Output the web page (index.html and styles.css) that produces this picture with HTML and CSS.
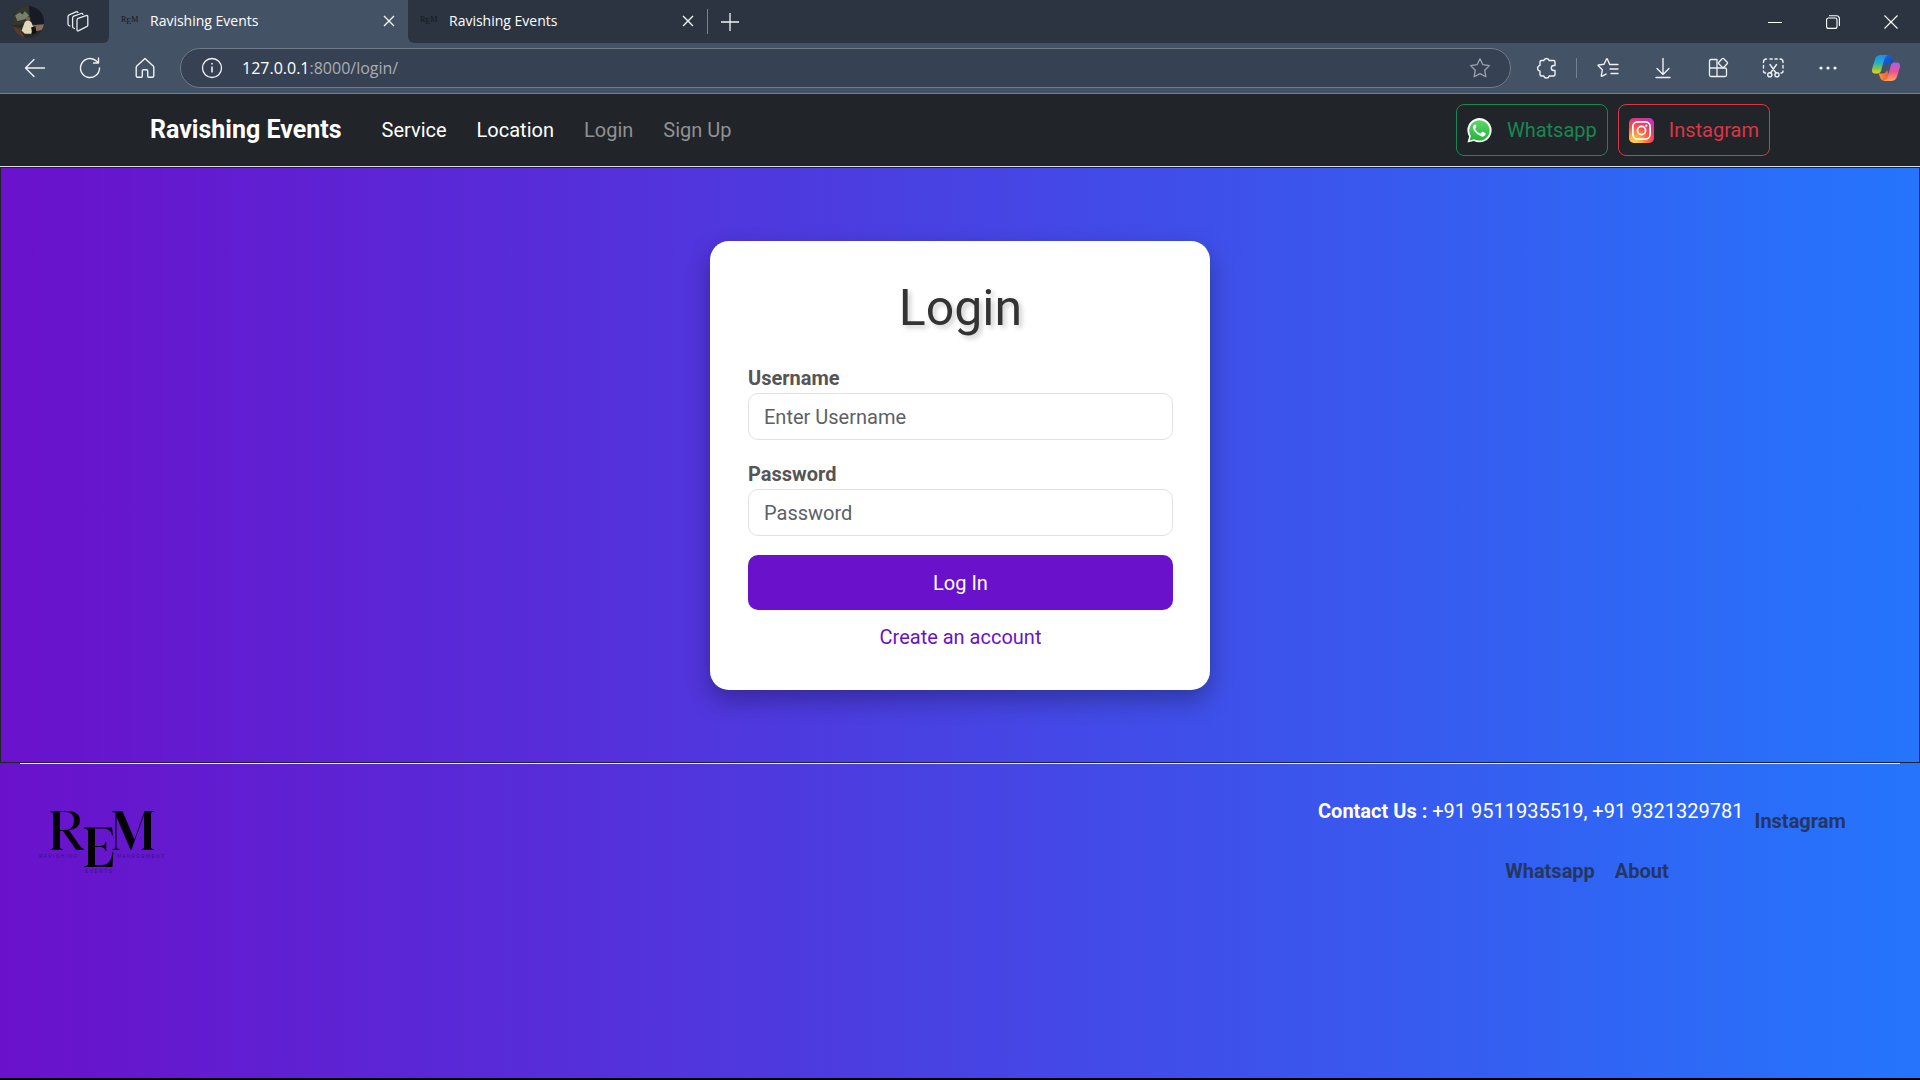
FILE: index.html
```html
<!DOCTYPE html>
<html lang="en">
<head>
<meta charset="utf-8">
<title>Ravishing Events</title>
<link rel="stylesheet" href="styles.css">
</head>
<body>
<header class="browser">
  <div class="tabstrip">
    <div class="tabstrip-start">
      <svg class="avatar" viewBox="0 0 30 30" aria-hidden="true">
        <defs><clipPath id="avatar-clip"><circle cx="15" cy="15" r="15"/></clipPath></defs>
        <g clip-path="url(#avatar-clip)">
          <rect width="30" height="30" fill="#2a2a26"/>
          <path d="M0 0h16v12l-6 5-10 1z" fill="#36372d"/>
          <path d="M16 0h14v17h-12z" fill="#171b28"/>
          <path d="M3 9l4-3 3 2 2-3 4 4-3 3-3 1-5 1z" fill="#77806d"/>
          <path d="M19 18l11-1v5l-9 2z" fill="#8b6b59"/>
          <path d="M0 19l8 2 4 9H0z" fill="#503b2c"/>
          <path d="M12 15l3-2 3 2 2 5-2 6h-6l-3-3z" fill="#e1d8b8"/>
          <circle cx="15" cy="12" r="2" fill="#80604a"/>
          <path d="M18 20l4-1 1 6-4 2z" fill="#111"/>
        </g>
      </svg>
      <button class="icon-btn" aria-label="Workspaces">
        <svg width="24" height="24" viewBox="0 0 24 24" fill="none" stroke="#e6eaee" stroke-width="1.3" stroke-linejoin="round" stroke-linecap="round"><path d="M12 8.4l8-2.8q1.8-.5 1.8 1.2v8.200q0 1.200-1.200 1.700l-7.800 4q-1.800.8-1.800-1v-9.500q0-1.300 1-1.800z"/><path d="M8.500 18.500l-1-.5q-.9-.5-.9-1.500V8q0-1.300 1.200-1.800l7.400-2.700q1.300-.4 1.700.8"/><path d="M4 16l-1-.5q-1-.5-1-1.500V6.500q0-1.200 1.200-1.700L10 1.900q1.300-.5 1.900.5"/></svg>
      </button>
    </div>
    <div class="tab tab-active">
      <span class="favicon" aria-hidden="true"><span>R</span><span class="low">E</span><span>M</span></span>
      <span class="tab-title">Ravishing Events</span>
      <button class="icon-btn" aria-label="Close tab"><svg width="12" height="12" viewBox="0 0 12 12" stroke="#f2f4f6" stroke-width="1.400"><path d="M1 1l10 10M11 1L1 11"/></svg></button>
    </div>
    <div class="tab">
      <span class="favicon" aria-hidden="true"><span>R</span><span class="low">E</span><span>M</span></span>
      <span class="tab-title">Ravishing Events</span>
      <button class="icon-btn" aria-label="Close tab"><svg width="12" height="12" viewBox="0 0 12 12" stroke="#f2f4f6" stroke-width="1.400"><path d="M1 1l10 10M11 1L1 11"/></svg></button>
    </div>
    <button class="icon-btn new-tab" aria-label="New tab"><svg width="18" height="18" viewBox="0 0 18 18" stroke="#f2f4f6" stroke-width="1.300"><path d="M9 0v18M0 9h18"/></svg></button>
    <div class="window-controls">
      <button class="icon-btn" aria-label="Minimize"><svg width="14" height="14" viewBox="0 0 14 14" stroke="#fff" stroke-width="1"><path d="M0 7.500h14"/></svg></button>
      <button class="icon-btn" aria-label="Restore"><svg width="14" height="14" viewBox="0 0 14 14" fill="none" stroke="#fff" stroke-width="1.100"><rect x=".6" y="3" width="10.400" height="10.400" rx="2"/><path d="M3 .7h7.400q3 0 3 3V11"/></svg></button>
      <button class="icon-btn" aria-label="Close"><svg width="14" height="14" viewBox="0 0 14 14" stroke="#fff" stroke-width="1.100"><path d="M.5.5l13 13M13.500.5l-13 13"/></svg></button>
    </div>
  </div>
  <div class="toolbar">
    <div class="nav-buttons">
      <button class="icon-btn" aria-label="Back"><svg width="24" height="24" viewBox="0 0 24 24" fill="none" stroke="#f0f2f5" stroke-width="1.400" stroke-linecap="round" stroke-linejoin="round"><path d="M21.500 12H3M11 3.500L2.500 12l8.500 8.500"/></svg></button>
      <button class="icon-btn" aria-label="Refresh"><svg width="24" height="24" viewBox="0 0 24 24" fill="none" stroke="#f0f2f5" stroke-width="1.400" stroke-linecap="round" stroke-linejoin="round"><path d="M21.500 12A9.500 9.500 0 1 1 18.700 5.300L20.500 7M20.500 2v5h-5"/></svg></button>
      <button class="icon-btn" aria-label="Home"><svg width="24" height="24" viewBox="0 0 24 24" fill="none" stroke="#f0f2f5" stroke-width="1.400" stroke-linecap="round" stroke-linejoin="round"><path d="M12 2.500L3.800 10q-.6.6-.6 1.400v8.300q0 1.500 1.500 1.500h3.600q1 0 1-1V15q0-1.200 1.200-1.200h3q1.200 0 1.200 1.200v5.200q0 1 1 1h3.600q1.500 0 1.500-1.500v-8.300q0-.8-.6-1.400z"/></svg></button>
    </div>
    <div class="address">
      <svg width="22" height="22" viewBox="0 0 22 22" fill="none" stroke="#f0f2f5" stroke-width="1.300"><circle cx="11" cy="11" r="9.500"/><path d="M11 9.500v6M11 6v1.600" stroke-width="1.600"/></svg>
      <span class="url"><span class="url-host">127.0.0.1</span>:8000/login/</span>
      <button class="icon-btn" aria-label="Add to favorites"><svg width="22" height="22" viewBox="0 0 22 22" fill="none" stroke="#9ba3ad" stroke-width="1.300" stroke-linejoin="round"><path d="M11 1.800l2.900 5.900 6.500.9-4.700 4.600 1.100 6.500-5.800-3.100-5.800 3.100 1.100-6.500L1.600 8.600l6.500-.9z"/></svg></button>
    </div>
    <div class="toolbar-actions">
      <button class="icon-btn" aria-label="Extensions"><svg width="24" height="24" viewBox="0 0 24 24" fill="none" stroke="#eef0f3" stroke-width="1.400" stroke-linejoin="round"><path d="M8.800 4.500a2.800 2.800 0 0 1 5.400 0h4.300q1.500 0 1.500 1.500v3.500h-1.200a2.500 2.500 0 0 0 0 5H20v4q0 1.500-1.500 1.500h-4.300a2.800 2.800 0 0 1-5.400 0H6.500Q5 20 5 18.500v-3.400a2.900 2.900 0 0 1 0-5.700V6q0-1.500 1.500-1.500z"/></svg></button>
      <span class="rule"></span>
      <button class="icon-btn" aria-label="Favorites"><svg width="24" height="24" viewBox="0 0 24 24" fill="none" stroke="#eef0f3" stroke-width="1.400" stroke-linecap="round" stroke-linejoin="round"><path d="M14.500 8.500h-.8L11.300 3q-.4-.6-.8 0L8 8.200l-5.500.8q-.8.200-.2.800l4 4-1 5.900q0 .9.800.5l4-2.100M14.500 8.500h7.500M14 13h8M15 17.500h7"/></svg></button>
      <button class="icon-btn" aria-label="Downloads"><svg width="24" height="24" viewBox="0 0 24 24" fill="none" stroke="#eef0f3" stroke-width="1.400" stroke-linecap="round" stroke-linejoin="round"><path d="M12 2.500v16M6 12.500l6 6 6-6M5 21.500h14"/></svg></button>
      <button class="icon-btn" aria-label="Apps"><svg width="24" height="24" viewBox="0 0 24 24" fill="none" stroke="#eef0f3" stroke-width="1.300" stroke-linejoin="round"><path d="M11 12V3.500H5Q3.500 3.500 3.500 5v14q0 1.500 1.500 1.500h14q1.500 0 1.500-1.500v-5.500q0-1.500-1.500-1.500H3.500M11 12v8.500"/><path d="M16.200 2.800q.8-.8 1.600 0l3.400 3.400q.8.800 0 1.600l-3.400 3.400q-.8.800-1.600 0l-3.400-3.400q-.8-.8 0-1.600z"/></svg></button>
      <button class="icon-btn" aria-label="Screenshot"><svg width="24" height="24" viewBox="0 0 24 24" fill="none" stroke="#eef0f3" stroke-width="1.400" stroke-linecap="round"><path d="M2.500 6.500V6q0-3 3-3M9 3h2.200M14 3h2.200M19 3q3 0 3 3v.5M22 9.500v2.500M22 15q0 2-2 2M2.500 9.500V12M2.500 15q0 2 2 2M9 8.500l6 8.500M15.500 8.500L9.500 17"/><circle cx="8.800" cy="18.800" r="2.100"/><circle cx="16" cy="18.800" r="2.100"/></svg></button>
      <button class="icon-btn" aria-label="Settings and more"><svg width="24" height="24" viewBox="0 0 24 24" fill="#f4f5f7"><circle cx="5" cy="12" r="1.600"/><circle cx="12" cy="12" r="1.600"/><circle cx="19" cy="12" r="1.600"/></svg></button>
    </div>
    <button class="icon-btn copilot" aria-label="Copilot">
      <svg width="28" height="26" viewBox="0 0 30 28"><defs>
        <linearGradient id="cp-a" x1="0" y1="0" x2="0" y2="1"><stop offset="0" stop-color="#1c8cf0"/><stop offset=".45" stop-color="#27b3c4"/><stop offset=".7" stop-color="#7cc24a"/><stop offset="1" stop-color="#f4d11c"/></linearGradient>
        <linearGradient id="cp-b" x1="0" y1="0" x2="0" y2="1"><stop offset="0" stop-color="#a95cf5"/><stop offset=".5" stop-color="#ee5390"/><stop offset="1" stop-color="#fda861"/></linearGradient>
        <linearGradient id="cp-c" x1="0" y1="0" x2="1" y2="1"><stop offset="0" stop-color="#1673e6"/><stop offset="1" stop-color="#0d3ecb"/></linearGradient>
        <linearGradient id="cp-d" x1="0" y1="0" x2="1" y2="0"><stop offset="0" stop-color="#f99b33"/><stop offset="1" stop-color="#f0443c"/></linearGradient></defs>
        <path d="M9 0h8q3 0 4 3l2 5h-4q-3 0-4 4z" fill="url(#cp-c)"/>
        <path d="M21 28h-8q-3 0-4-3l-2-5h5q3 0 4-4z" fill="url(#cp-d)"/>
        <path d="M9 0h8q-3 1-4 5l-3 11q-1 4-4 4H4q-5 0-4-5l3-10Q4.500 0 9 0z" fill="url(#cp-a)"/>
        <path d="M21 28h-8q3-1 4-5l3-11q1-4 4-4h2q5 0 4 5l-3 10q-1.500 5-6 5z" fill="url(#cp-b)"/></svg>
    </button>
  </div>
</header>

<nav class="navbar">
  <a class="brand" href="#">Ravishing Events</a>
  <ul class="menu">
    <li><a href="#" class="bright">Service</a></li>
    <li><a href="#" class="bright">Location</a></li>
    <li><a href="#">Login</a></li>
    <li><a href="#">Sign Up</a></li>
  </ul>
  <div class="social">
    <a class="social-btn whatsapp" href="#">
      <svg width="25" height="25" viewBox="0 0 26 26"><defs><linearGradient id="wa" x1="0" y1="0" x2="0" y2="1"><stop offset="0" stop-color="#5fd668"/><stop offset="1" stop-color="#22b43c"/></linearGradient></defs><path d="M.5 25.500l1.700-6.300A12.600 12.600 0 1 1 7 23.800z" fill="#fff"/><path d="M2.700 23.300l1.300-4.700A10.600 10.600 0 1 1 7.500 22z" fill="url(#wa)"/><path d="M9.500 7.500q-.3-.8-1-.8-1 0-1.700 1-1.500 2.400.9 5.800 3 4.300 6.900 5.600 3.200 1 4.600-1.600.5-1.100.2-1.700l-3-1.500q-.6-.2-1 .3l-1 1.300q-.4.500-1 .2-3.300-1.500-4.800-4.400-.2-.5.1-.9l.9-1.100q.3-.4 0-.9z" fill="#fff"/></svg>
      <span>Whatsapp</span>
    </a>
    <a class="social-btn instagram" href="#">
      <svg width="25" height="25" viewBox="0 0 26 26" fill="none"><defs><radialGradient id="ig" cx=".2" cy="1" r="1.200"><stop offset="0" stop-color="#ffd84f"/><stop offset=".25" stop-color="#ffad3e"/><stop offset=".52" stop-color="#ff5544"/><stop offset=".8" stop-color="#d9367e"/><stop offset="1" stop-color="#b837c5"/></radialGradient></defs><rect width="26" height="26" rx="5" fill="url(#ig)"/><rect x="4" y="4" width="18" height="18" rx="5" stroke="#fff" stroke-width="1.800"/><circle cx="13" cy="13" r="4.200" stroke="#fff" stroke-width="1.800"/><circle cx="18" cy="8" r="1.200" fill="#fff"/></svg>
      <span>Instagram</span>
    </a>
  </div>
</nav>

<main class="hero">
  <form class="card">
    <h1>Login</h1>
    <div class="field"><label for="username">Username</label><input id="username" type="text" placeholder="Enter Username"></div>
    <div class="field"><label for="password">Password</label><input id="password" type="password" placeholder="Password"></div>
    <button class="submit" type="button">Log In</button>
    <a class="create" href="#">Create an account</a>
  </form>
</main>

<footer class="footer">
  <div class="footer-inner">
    <svg class="logo" width="136" height="68" viewBox="0 0 136 68" role="img" aria-label="Ravishing Events Management">
      <g fill="#050208">
        <path d="M12 2h16q14 0 14 9.500 0 8-11 9.700L42 37q2 2.700 4 3v.8h-8L25 22h-3v16q0 2 3 2v.8H12V40q3 0 3-2V5q0-2-3-2zM22 3v18h4q10 0 10-9.500T26 3z"/>
        <path d="M46 18.500h28l1 8h-.8q-1.500-7-9-7H57v17.500h5q5 0 5.500-4h.8v9h-.8q-.5-4-5.500-4h-5V56h7q9 0 10.500-13h.9l-1 15H46v-.8q4 0 4-2V22q0-2-4-2.500z"/>
        <path d="M74 2h10.500l12 28.500L106.500 2h9.500v.8q-3 0-3 2V38q0 2 3 2v.8h-13V40q3 0 3-2V6L93.500 40.800h-1L78.500 8v30q0 2 3 2v.8H74V40q3.500 0 3.500-2V5q0-2-3.500-2z"/>
      </g>
      <g class="logo-caption"><text x="1" y="49">R A V I S H I N G</text><text x="79" y="49">M A N A G E M E N T</text><text x="47" y="64">E V E N T S</text></g>
    </svg>
    <div class="contact">
      <div class="contact-row"><p><strong>Contact Us :</strong> +91 9511935519, +91 9321329781</p><a class="instagram-link" href="#">Instagram</a></div>
      <div class="contact-links"><a href="#">Whatsapp</a><a href="#">About</a></div>
    </div>
  </div>
</footer>
</body>
</html>
```
FILE: styles.css
```css
* { box-sizing: border-box; }
body {
  margin: 0;
  min-height: 100vh;
  display: flex;
  flex-direction: column;
  font: 20px/30px Roboto, sans-serif;
  background: linear-gradient(to right, #6a11cb, #2575fc);
  border-bottom: 2px solid #000;
}
a { text-decoration: none; }
svg { display: block; flex: none; }
.icon-btn {
  display: flex;
  padding: 0;
  border: 0;
  background: none;
  flex: none;
}

/* Browser window */
.browser { font-family: "Open Sans", sans-serif; background: #445266; border-bottom: 1px solid #75808e; }
.tabstrip { display: flex; height: 43px; background: #445266; }
.tabstrip > * { background: #2b3440; }
.tabstrip-start {
  width: 109px;
  padding-left: 12px;
  display: flex;
  align-items: center;
  gap: 22px;
  border-radius: 0 0 6px 0;
}
.avatar { width: 32px; height: 32px; }
.tab {
  width: 299px;
  padding: 0 13px 2px 12px;
  display: flex;
  align-items: center;
  color: #fff;
  font-size: 14px;
  border-radius: 0 0 0 6px;
}
.tab.tab-active { background: #445266; border-radius: 8px 8px 0 0; }
.favicon { display: flex; width: 29px; font: 8px/10px "Liberation Serif", serif; color: #15191f; }
.favicon .low { padding-top: 2px; }
.tab-title { flex: 1; }
.new-tab { width: 46px; align-items: center; justify-content: center; position: relative; }
.new-tab::before { content: ""; position: absolute; left: 0; top: 9px; bottom: 9px; width: 1px; background: #7a828c; }
.window-controls { flex: 1; display: flex; align-items: center; justify-content: flex-end; gap: 44px; padding-right: 22px; }
.toolbar { display: flex; align-items: center; height: 50px; padding-right: 20px; }
.nav-buttons { display: flex; gap: 31px; padding: 0 23px; }
.address {
  flex: 1;
  height: 40px;
  display: flex;
  align-items: center;
  padding: 0 19px 0 20px;
  border: 1px solid #707b89;
  border-radius: 20px;
  background: #364253;
}
.url { flex: 1; padding-left: 19px; font-size: 16px; color: #a8adb4; }
.url-host { color: #fff; }
.toolbar-actions { display: flex; align-items: center; gap: 31px; padding-left: 24px; }
.rule { width: 1px; height: 20px; margin: 0 -12px 0 -14px; background: #758090; }
.copilot { padding-left: 32px; }

/* Site navigation */
.navbar {
  display: flex;
  align-items: center;
  min-height: 73px;
  padding: 0 150px;
  background: #212529;
  border-bottom: 1px solid #ddd;
}
.brand { color: #fff; font-size: 25px; font-weight: 700; }
.menu { display: flex; gap: 30px; margin: 0; padding: 0 0 0 40px; list-style: none; flex: 1; }
.menu a { color: #909294; }
.menu .bright { color: #fff; }
.social { display: flex; gap: 10px; }
.social-btn {
  display: flex;
  align-items: center;
  gap: 15px;
  height: 52px;
  padding: 0 10px;
  border: 1px solid;
  border-radius: 8px;
}
.whatsapp { color: #198754; }
.instagram { color: #dc3545; }

/* Login form */
.hero {
  display: flex;
  justify-content: center;
  padding: 73px 20px 72px;
  border: 1px solid #212529;
  background: linear-gradient(to right, #6a11cb, #2575fc);
}
.card {
  width: 500px;
  padding: 37px 37px 38px 38px;
  display: flex;
  flex-direction: column;
  border-radius: 19px;
  background: #fff;
  box-shadow: 0 10px 25px rgba(0, 0, 0, .3);
}
h1 {
  margin: 0 0 25px;
  font-size: 50px;
  line-height: 60px;
  font-weight: 400;
  text-align: center;
  color: #333;
  text-shadow: 3px 3px 5px rgba(0, 0, 0, .2);
}
.field { margin-bottom: 19px; display: flex; flex-direction: column; }
label { font-weight: 700; color: #555; }
input {
  height: 47px;
  padding: 0 15px;
  border: 1px solid #dee2e6;
  border-radius: 10px;
  font: inherit;
}
input::placeholder { color: #5c6166; opacity: 1; }
.submit {
  height: 55px;
  border: 0;
  border-radius: 10px;
  background: #6a11cb;
  color: #fff;
  font: inherit;
}
.create { margin-top: 12px; text-align: center; color: #6a11cb; }

/* Footer */
.footer { flex: 1; padding: 0 20px; background: linear-gradient(to right, #6a11cb, #2575fc); }
.footer-inner { display: flex; justify-content: space-between; border-top: 1px solid #dee2e6; padding: 32px 44px 0 18px; }
.logo { margin-top: 13px; }
.logo-caption { font: 5px "Liberation Sans", sans-serif; fill: #3a1280; }
.contact { color: #fff; width: 538px; }
.contact-row { display: flex; gap: 11px; }
.contact-row p { margin: 0; }
.contact strong { font-weight: 700; }
.contact a { color: #243763; font-weight: 700; }
.instagram-link { margin-top: 10px; }
.contact-links { display: flex; justify-content: center; gap: 20px; padding-top: 20px; }
```
